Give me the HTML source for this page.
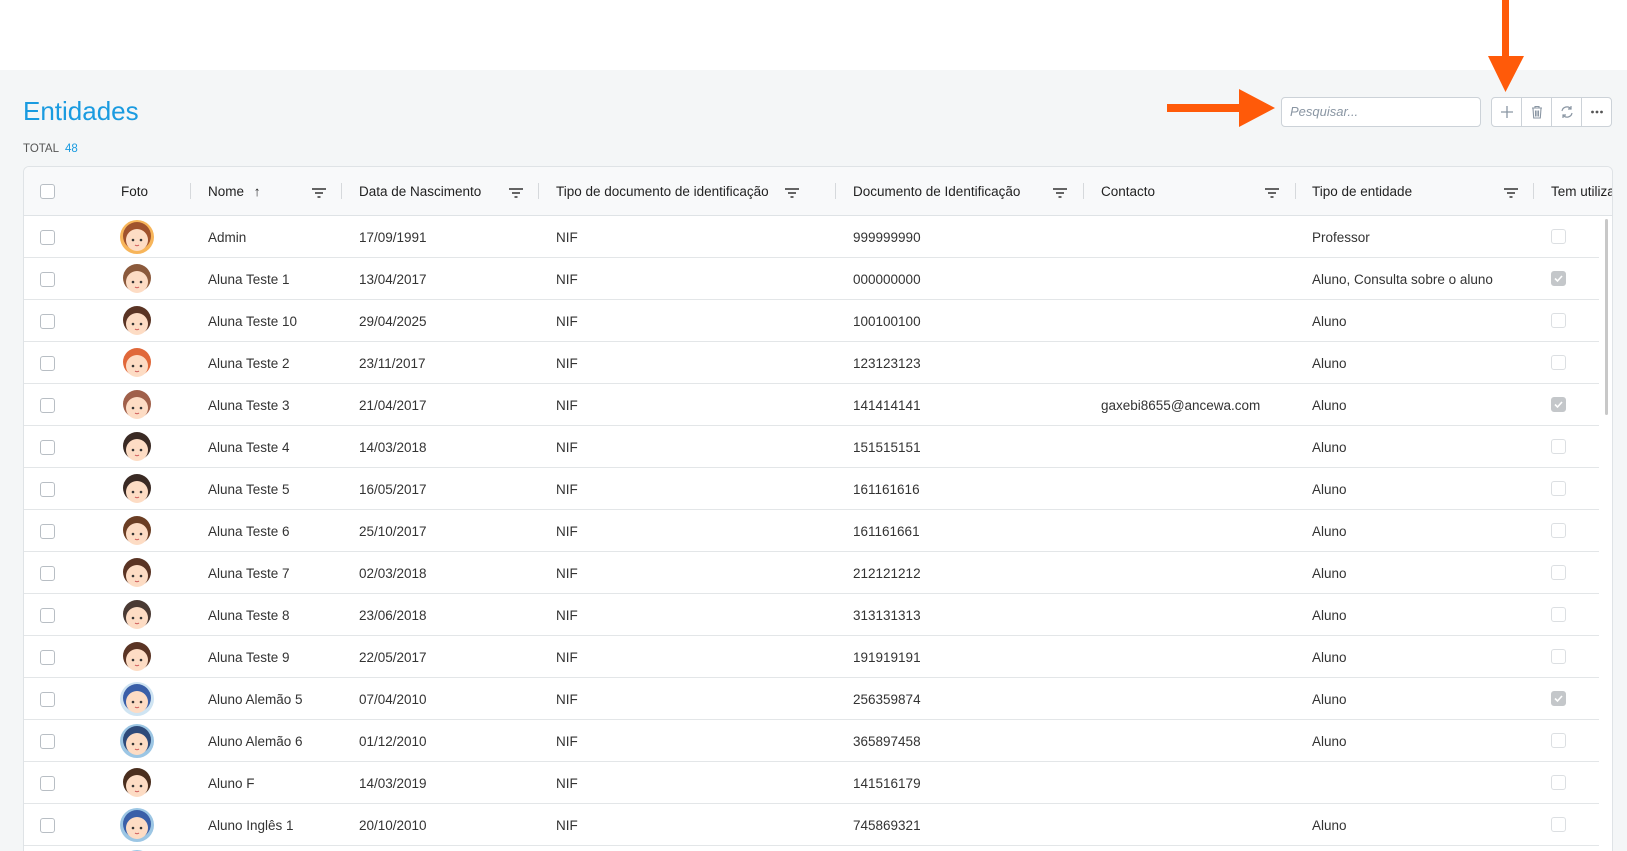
<!DOCTYPE html>
<html style="width:1627px;height:851px;overflow:hidden"><head><meta charset="utf-8"><style>
*{box-sizing:border-box;margin:0;padding:0}
body{width:1627px;height:851px;overflow:hidden;background:#fff;font-family:"Liberation Sans",sans-serif;color:#333;position:relative}
.bg{position:absolute;left:0;top:70px;width:1627px;height:781px;background:#f4f6f7}
.title{position:absolute;left:23px;top:96px;font-size:26px;color:#1a9be0}
.total{position:absolute;left:23px;top:143px;font-size:11.5px;color:#555}
.total b{font-weight:normal;color:#1a9be0;margin-left:6px}
.search{position:absolute;left:1281px;top:97px;width:200px;height:30px;border:1px solid #ccd2d8;border-radius:4px;background:#fff;font-style:italic;font-size:13px;color:#8a96a3;padding:6px 8px}
.btns{position:absolute;left:1491px;top:97px;width:121px;height:30px;border:1px solid #ccd2d8;border-radius:4px;background:#fff;display:flex}
.btns div{flex:1;border-right:1px solid #ccd2d8;display:flex;align-items:center;justify-content:center}
.btns div:last-child{border-right:none}
.table{position:absolute;left:23px;top:166px;width:1590px;height:700px;background:#fff;border:1px solid #dfe3e6;border-radius:6px;overflow:hidden}
.hdr{position:absolute;left:0;top:0;width:100%;height:49px;background:#f8f9fa;border-bottom:1px solid #dfe3e6}
.row{position:absolute;left:0;width:1575px;height:42px;border-bottom:1px solid #e3e6e8}
.t{position:absolute;font-size:13.5px;white-space:nowrap}
.h{position:absolute;font-size:13.5px;top:17px;color:#222;white-space:nowrap}
.sep{position:absolute;top:16px;width:1px;height:16px;background:#d6d9dc}
.cb{position:absolute;width:15px;height:15px;border:1px solid #b8bec4;border-radius:3px;background:#fff}
.cbc{background:#c4c7ca;border-color:#c4c7ca}
.fi{position:absolute;top:18px}
.av{position:absolute;left:96px;top:4px}
.sb{position:absolute;left:1581px;top:52px;width:3px;height:196px;background:#c8c8c8;border-radius:2px}
</style></head><body>
<div class="bg"></div>
<div class="title">Entidades</div>
<div class="total">TOTAL<b>48</b></div>
<div class="search">Pesquisar...</div>
<div class="btns">
<div><svg width="14" height="14"><path d="M7 1v12M1 7h12" stroke="#8a96a3" stroke-width="1.3"/></svg></div>
<div><svg width="14" height="14"><path d="M2 3h10M5 3V1.5h4V3M3 3.5l.7 9.5h6.6L11 3.5M5.5 5.5v6M7 5.5v6M8.5 5.5v6" stroke="#8a96a3" stroke-width="1.1" fill="none"/></svg></div>
<div><svg width="14" height="14"><path d="M2 6a5 5 0 0 1 9-2M12 8a5 5 0 0 1-9 2M11 1v3H8M3 13v-3h3" stroke="#8a96a3" stroke-width="1.2" fill="none"/></svg></div>
<div><svg width="14" height="4"><circle cx="2.5" cy="2" r="1.4" fill="#555"/><circle cx="7" cy="2" r="1.4" fill="#555"/><circle cx="11.5" cy="2" r="1.4" fill="#555"/></svg></div>
</div>
<svg style="position:absolute;left:1165px;top:88px" width="112" height="40"><path d="M2 16h72v-15l36 19-36 19v-15H2z" fill="#ff5a09"/></svg>
<svg style="position:absolute;left:1486px;top:0" width="40" height="93"><path d="M16 0h7v56h15L19.5 92 2 56h14z" fill="#ff5a09"/></svg>
<div class="table">
<div class="hdr">
<div class="cb" style="left:16px;top:17px"></div>
<div class="h" style="left:97px">Foto</div><div class="sep" style="left:166px"></div>
<div class="h" style="left:184px">Nome <span style="margin-left:6px">↑</span></div><div class="sep" style="left:317px"></div>
<div class="h" style="left:335px">Data de Nascimento</div><div class="sep" style="left:514px"></div>
<div class="h" style="left:532px">Tipo de documento de identificação</div><div class="sep" style="left:811px"></div>
<div class="h" style="left:829px">Documento de Identificação</div><div class="sep" style="left:1059px"></div>
<div class="h" style="left:1077px">Contacto</div><div class="sep" style="left:1271px"></div>
<div class="h" style="left:1288px">Tipo de entidade</div><div class="sep" style="left:1509px"></div>
<div class="h" style="left:1527px">Tem utilizador</div>
</div>
<div id="rows"></div>
<div class="sb"></div>
</div>
<script>
const F='<svg width="14" height="10"><path d="M0 1h14M3 5h8M5.5 9h3" stroke="#333" stroke-width="1.6"/></svg>';
[288,485,761,1029,1241,1480].forEach(x=>{document.querySelector('.hdr').insertAdjacentHTML('beforeend','<div class="fi" style="left:'+x+'px">'+F+'</div>')});
const d=[["Admin","17/09/1991","999999990","","Professor",0,"#f7b55a","#a0522d"],
["Aluna Teste 1","13/04/2017","000000000","","Aluno, Consulta sobre o aluno",1,"#fff","#8b5a3c"],
["Aluna Teste 10","29/04/2025","100100100","","Aluno",0,"#fff","#5a3424"],
["Aluna Teste 2","23/11/2017","123123123","","Aluno",0,"#fff","#e0683a"],
["Aluna Teste 3","21/04/2017","141414141","gaxebi8655@ancewa.com","Aluno",1,"#fff","#a0604a"],
["Aluna Teste 4","14/03/2018","151515151","","Aluno",0,"#fff","#3a2a24"],
["Aluna Teste 5","16/05/2017","161161616","","Aluno",0,"#fff","#3a2a24"],
["Aluna Teste 6","25/10/2017","161161661","","Aluno",0,"#fff","#6b3e24"],
["Aluna Teste 7","02/03/2018","212121212","","Aluno",0,"#fff","#5a3424"],
["Aluna Teste 8","23/06/2018","313131313","","Aluno",0,"#fff","#4a3a34"],
["Aluna Teste 9","22/05/2017","191919191","","Aluno",0,"#fff","#5a3424"],
["Aluno Alemão 5","07/04/2010","256359874","","Aluno",1,"#cfe4f2","#3a5fa8"],
["Aluno Alemão 6","01/12/2010","365897458","","Aluno",0,"#9cc6e4","#2e4a7a"],
["Aluno F","14/03/2019","141516179","","",0,"#fff","#4a2e1e"],
["Aluno Inglês 1","20/10/2010","745869321","","Aluno",0,"#9cc6e4","#3a5fa8"],
["Aluno X","01/01/2010","111111111","","Aluno",0,"#9cc6e4","#3a5fa8"]];
let h='';
d.forEach((r,i)=>{const top=49+42*i;
const av='<svg class="av" width="34" height="34"><circle cx="17" cy="17" r="17" fill="'+r[6]+'"/><ellipse cx="17" cy="16" rx="14" ry="14" fill="'+r[7]+'"/><ellipse cx="17" cy="20" rx="11" ry="11" fill="#fddcc4"/><circle cx="13" cy="20" r="1.3" fill="#333"/><circle cx="21" cy="20" r="1.3" fill="#333"/><path d="M15 25q2 1.5 4 0" stroke="#c55" fill="none"/></svg>';
h+='<div class="row" style="top:'+top+'px"><div class="cb" style="left:16px;top:14px"></div>'+av+
'<div class="t" style="left:184px;top:14px">'+r[0]+'</div><div class="t" style="left:335px;top:14px">'+r[1]+'</div><div class="t" style="left:532px;top:14px">NIF</div><div class="t" style="left:829px;top:14px">'+r[2]+'</div><div class="t" style="left:1077px;top:14px">'+r[3]+'</div><div class="t" style="left:1288px;top:14px">'+r[4]+'</div>'+
'<div class="cb '+(r[5]?'cbc':'')+'" style="left:1527px;top:13px;border-color:'+(r[5]?'#c4c7ca':'#dcdfe2')+'">'+(r[5]?'<svg width="13" height="13" style="position:absolute;left:0;top:0"><path d="M3 6.5l2.5 2.5 4.5-5" stroke="#fff" stroke-width="1.6" fill="none"/></svg>':'')+'</div></div>';});
document.getElementById('rows').innerHTML=h;
</script>
</body></html>
